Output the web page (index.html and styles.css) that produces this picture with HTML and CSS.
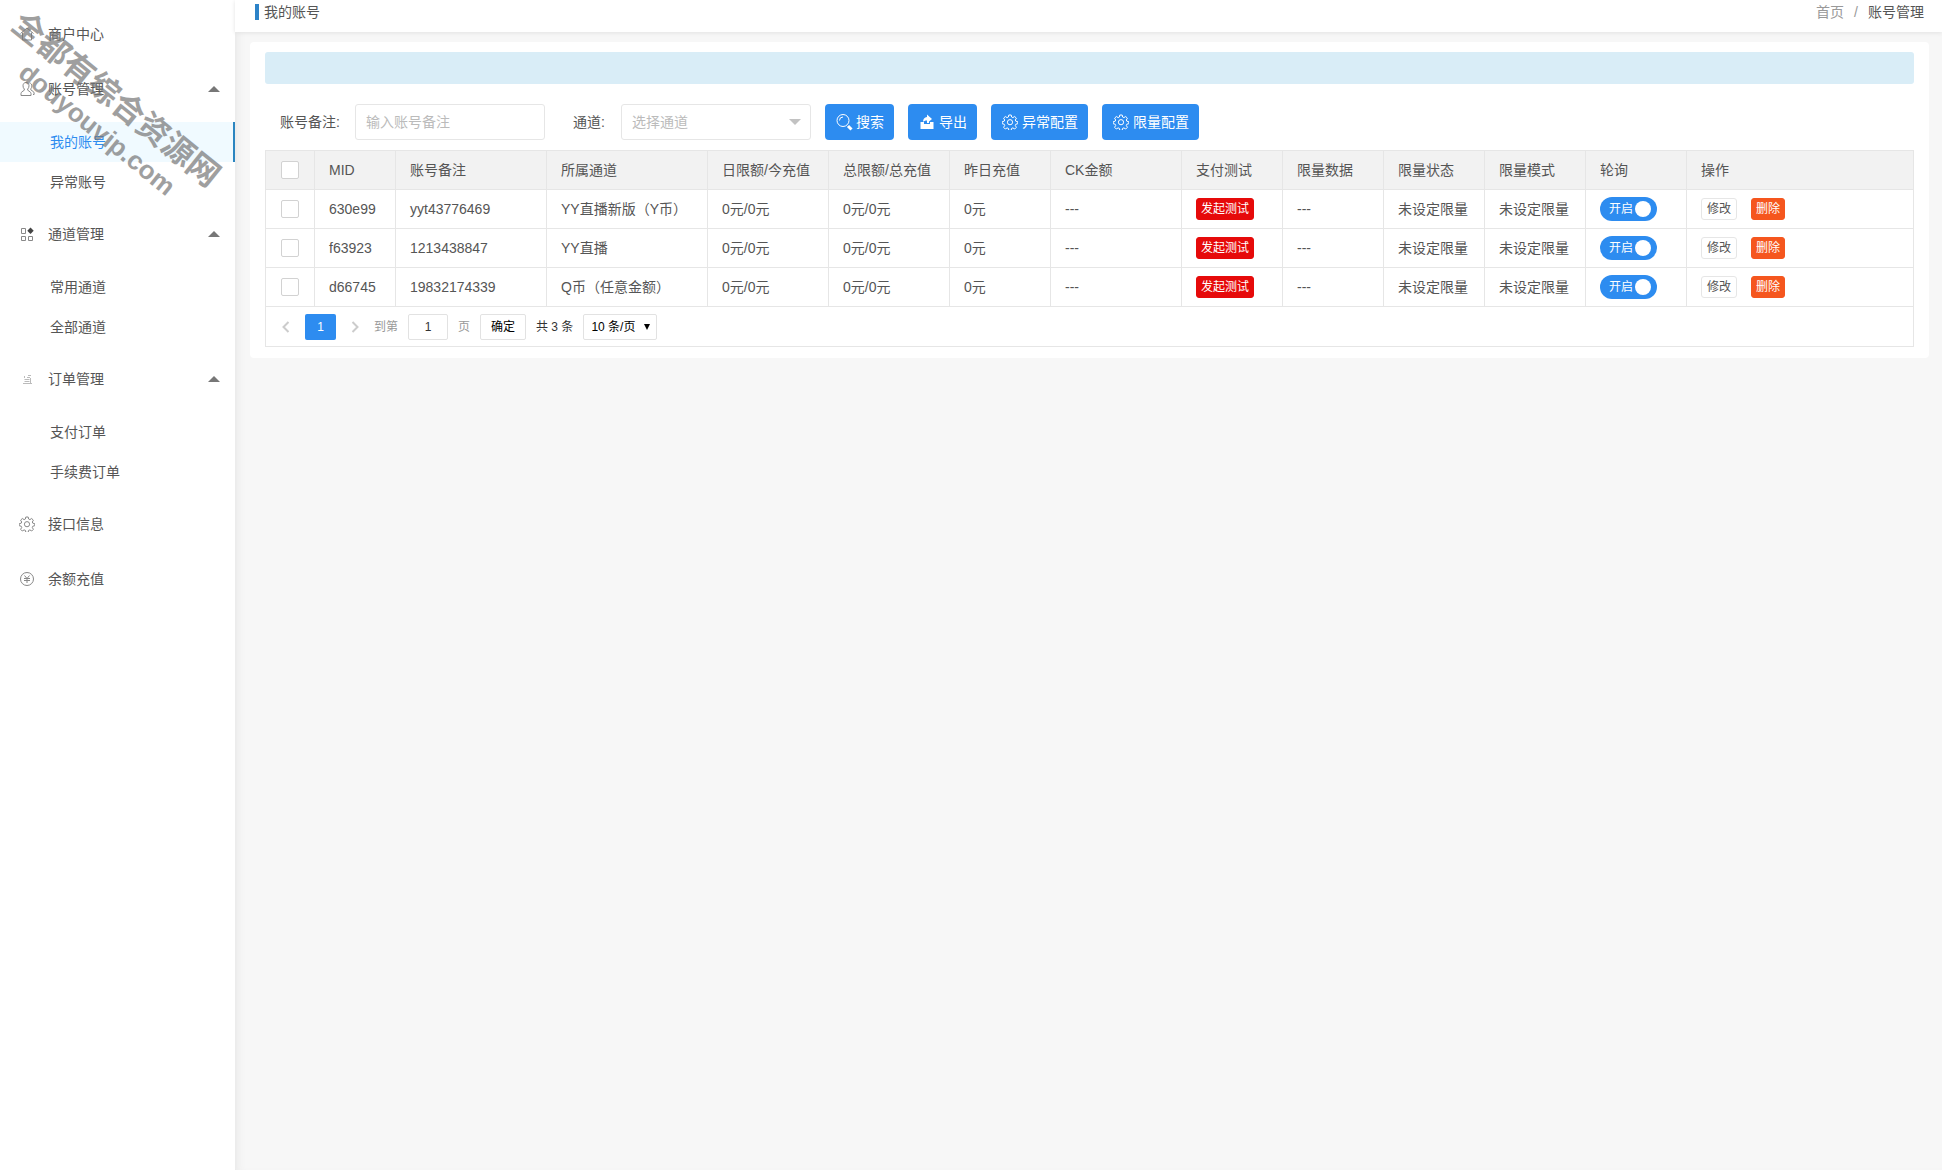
FILE: index.html
```html
<!DOCTYPE html>
<html lang="zh-CN">
<head>
<meta charset="utf-8">
<title>我的账号</title>
<link rel="stylesheet" href="styles.css">
</head>
<body>
<svg class="sprite" aria-hidden="true">
  <symbol id="i-gear" viewBox="0 0 16 16"><path d="M6.8 1h2.4l.4 2 1.3.6 1.8-1.1 1.7 1.7-1.1 1.8.5 1.2 2 .5v2l-2 .5-.5 1.3 1.1 1.8-1.7 1.7-1.8-1.1-1.3.5-.4 2H6.8l-.4-2-1.3-.5-1.8 1.1-1.700-1.700 1.100-1.800-.5-1.300-2-.5v-2l2-.5.5-1.200L1.600 4.200l1.700-1.700 1.800 1.100L6.400 3z"/><circle cx="8" cy="8.200" r="2.600"/></symbol>
</svg>
<div class="app">
  <nav class="side">
    <a class="item" href="#"><svg class="ico" viewBox="0 0 16 16"><path d="M1.500 7.500L8 2l6.500 5.500M3.500 6.500V14h9V6.500"/></svg>商户中心</a>
    <a class="item" href="#"><svg class="ico" viewBox="0 0 16 16"><path d="M7 1.500c2 0 3 1.500 3 3.300 0 1.500-.6 2.500-1.300 3.200v1.200l2.300 1.600c.7.400 1 1 1 1.700v2H2v-2c0-.7.300-1.300 1-1.700l2.300-1.600V8C4.600 7.300 4 6.300 4 4.800 4 3 5 1.500 7 1.500z"/><path d="M10.500 2c1.600.2 2.400 1.500 2.400 3 0 1.300-.5 2.200-1.100 2.800v1l2.200 1.600c.8.400 1.100 1 1.100 1.600v1.500H14"/></svg>账号管理<i class="caret"></i></a>
    <div class="subs">
      <a class="sub active" href="#">我的账号</a>
      <a class="sub" href="#">异常账号</a>
    </div>
    <a class="item" href="#"><svg class="ico" viewBox="0 0 16 16"><path d="M2.500 2.500h4v5h-4zM2.500 10.500h4v4h-4zM9.500 10.500h4v4h-4z"/><path class="fill" d="M11.500 1.500l3.200 3.200L11.500 8 8.300 4.700z"/></svg>通道管理<i class="caret"></i></a>
    <div class="subs">
      <a class="sub" href="#">常用通道</a>
      <a class="sub" href="#">全部通道</a>
    </div>
    <a class="item" href="#"><svg class="ico pale" viewBox="0 0 16 16"><path d="M4 12.500h9M5.500 5v2M11.500 7v5M5.500 8.500h5M5.500 10.500h5M8 6.500h3M9 4.500h3"/></svg>订单管理<i class="caret"></i></a>
    <div class="subs">
      <a class="sub" href="#">支付订单</a>
      <a class="sub" href="#">手续费订单</a>
    </div>
    <a class="item" href="#"><svg class="ico"><use href="#i-gear"/></svg>接口信息</a>
    <a class="item" href="#"><svg class="ico" viewBox="0 0 16 16"><circle cx="8" cy="8" r="6.500"/><path d="M5.500 4.500L8 7.500l2.500-3M8 7.500V12M5 7.500h6M5 9.500h6"/></svg>余额充值</a>
  </nav>
  <main class="main">
    <header class="top">
      <h1>我的账号</h1>
      <div class="crumbs"><a href="#">首页</a><span>/</span><b>账号管理</b></div>
    </header>
    <section class="card">
      <div class="notice"></div>
      <form class="search">
        <label for="remark">账号备注:</label>
        <input class="field" id="remark" type="text" placeholder="输入账号备注">
        <label class="second" for="channel">通道:</label>
        <div class="pick"><select class="field" id="channel"><option>选择通道</option></select></div>
        <button class="btn" type="button"><svg viewBox="0 0 18 18"><circle cx="8" cy="7.500" r="6"/><path d="M4.500 7.500A3.500 3.500 0 0 1 8 4"/><path class="thick" d="M13 13l3.500 3.500"/></svg>搜索</button>
        <button class="btn" type="button"><svg viewBox="0 0 18 18"><path class="solid" d="M2.500 9H6v2h6V9h3.500v7h-13z"/><path class="solid" d="M5 9c0-3 1.500-4.500 4-5V1.500L14 6l-3 2.500V10H9V7.500C7 7.500 6 8 5 9z"/></svg>导出</button>
        <button class="btn" type="button"><svg viewBox="0 0 18 18"><use href="#i-gear" x="1" y="1" width="16" height="16"/></svg>异常配置</button>
        <button class="btn" type="button"><svg viewBox="0 0 18 18"><use href="#i-gear" x="1" y="1" width="16" height="16"/></svg>限量配置</button>
      </form>
      <div class="grid">
        <table>
          <colgroup><col class="w49"><col class="w81"><col class="w151"><col class="w161"><col class="w121"><col class="w121"><col class="w101"><col class="w131"><col class="w101"><col class="w101"><col class="w101"><col class="w101"><col class="w101"><col></colgroup>
          <thead><tr><th><input type="checkbox" aria-label="全选"></th><th>MID</th><th>账号备注</th><th>所属通道</th><th>日限额/今充值</th><th>总限额/总充值</th><th>昨日充值</th><th>CK金额</th><th>支付测试</th><th>限量数据</th><th>限量状态</th><th>限量模式</th><th>轮询</th><th>操作</th></tr></thead>
          <tbody>
            <tr><td><input type="checkbox" aria-label="选择 630e99"></td><td>630e99</td><td>yyt43776469</td><td>YY直播新版（Y币）</td><td>0元/0元</td><td>0元/0元</td><td>0元</td><td>---</td><td><button class="mini red">发起测试</button></td><td>---</td><td>未设定限量</td><td>未设定限量</td><td><button class="switch" role="switch" aria-checked="true">开启<i></i></button></td><td><button class="mini">修改</button><button class="mini orange">删除</button></td></tr>
            <tr><td><input type="checkbox" aria-label="选择 f63923"></td><td>f63923</td><td>1213438847</td><td>YY直播</td><td>0元/0元</td><td>0元/0元</td><td>0元</td><td>---</td><td><button class="mini red">发起测试</button></td><td>---</td><td>未设定限量</td><td>未设定限量</td><td><button class="switch" role="switch" aria-checked="true">开启<i></i></button></td><td><button class="mini">修改</button><button class="mini orange">删除</button></td></tr>
            <tr><td><input type="checkbox" aria-label="选择 d66745"></td><td>d66745</td><td>19832174339</td><td>Q币（任意金额）</td><td>0元/0元</td><td>0元/0元</td><td>0元</td><td>---</td><td><button class="mini red">发起测试</button></td><td>---</td><td>未设定限量</td><td>未设定限量</td><td><button class="switch" role="switch" aria-checked="true">开启<i></i></button></td><td><button class="mini">修改</button><button class="mini orange">删除</button></td></tr>
          </tbody>
        </table>
        <div class="pager">
          <button class="arrow" aria-label="上一页"><svg viewBox="0 0 10 12"><path d="M7.500 1l-5 5 5 5"/></svg></button>
          <button class="page">1</button>
          <button class="arrow" aria-label="下一页"><svg viewBox="0 0 10 12"><path d="M2.500 1l5 5-5 5"/></svg></button>
          <label for="goto">到第</label>
          <input id="goto" type="text" value="1">
          <span class="unit">页</span>
          <button class="ok">确定</button>
          <span class="total">共 3 条</span>
          <div class="size"><select aria-label="每页条数"><option>10 条/页</option></select></div>
        </div>
      </div>
    </section>
  </main>
</div>
<div class="mark" aria-hidden="true"><div class="mark-name">全都有综合资源网</div><div class="mark-site">douyouvip.com</div></div>
</body>
</html>
```
FILE: styles.css
```css
* { box-sizing: border-box; }
body {
  margin: 0;
  background: #fff;
  color: #555;
  font: 14px/20px "Liberation Sans", "Noto Sans CJK SC", sans-serif;
}
button, input, select { font: inherit; color: inherit; margin: 0; }
button { padding: 0; border: 0; background: none; white-space: nowrap; }
a { color: inherit; text-decoration: none; }
svg { fill: none; stroke: currentColor; }
.sprite { display: none; }
.app { display: flex; min-height: calc(100vh - 3px); margin-bottom: 3px; }

.side { flex: 0 0 235px; padding-top: 7px; background: #fff; }
.item { display: flex; align-items: center; height: 55px; padding: 0 15px 2px 19px; }
.ico { width: 16px; height: 16px; margin-right: 13px; color: #888; }
.ico .fill { fill: #444; stroke: none; }
.ico.pale { color: #bbb; }
.caret { margin-left: auto; border: 6px solid transparent; border-top: 0; border-bottom-color: #777; }
.subs { padding: 5px 0; }
.sub { display: flex; align-items: center; height: 40px; padding-left: 50px; border-right: 2px solid transparent; }
.sub.active { color: #2d8cf0; background: #f0faff; border-color: #2b85c0; }

.main { flex: 1; min-width: 0; background: #f7f7f7; box-shadow: inset 8px 0 8px -6px #e6e6e6; }
.top {
  display: flex; align-items: flex-start; justify-content: space-between;
  height: 32px; padding: 2px 18px 0 20px;
  background: #fff; box-shadow: 0 1px 4px #e2e2e2;
}
h1 { display: flex; align-items: center; gap: 5px; margin: 0; font-size: 14px; font-weight: 400; }
h1::before { content: ""; width: 4px; height: 16px; background: #2d83c8; }
.crumbs { display: flex; gap: 10px; color: #999; }
.crumbs b { font-weight: 400; color: #555; }

.card { margin: 10px 13px 0 15px; padding: 10px 15px 11px; border-radius: 4px; background: #fff; }
.notice { height: 32px; border-radius: 3px; background: #d9edf7; }
.search { display: flex; align-items: center; margin: 20px 0 10px; padding-left: 15px; }
.search label { width: 60px; margin-right: 15px; }
.search .second { width: 33px; margin-left: 28px; }
.field { width: 190px; height: 36px; padding: 0 10px; border: 1px solid #e6e6e6; border-radius: 3px; background: #fff; outline: 0; }
.field::placeholder { color: #bbb; }
.pick, .size { position: relative; }
.pick select, .size select { appearance: none; display: block; }
.pick select { color: #bbb; }
.pick::after { content: ""; position: absolute; right: 10px; top: 15px; border: 6px solid transparent; border-bottom: 0; border-top-color: #c2c2c2; }
.btn { display: flex; align-items: center; gap: 3px; height: 36px; margin-left: 14px; padding: 0 10px; border-radius: 4px; background: #2d8cf0; color: #fff; }
.btn svg { width: 18px; height: 18px; }
.btn .thick { stroke-width: 3; }
.btn .solid { fill: #fff; stroke: none; }

.grid { border: 1px solid #e6e6e6; }
table { width: 100%; table-layout: fixed; border-collapse: separate; border-spacing: 0; }
th, td { height: 39px; padding: 0 14px; border-right: 1px solid #e6e6e6; border-bottom: 1px solid #e6e6e6; text-align: left; font-weight: 400; white-space: nowrap; }
th { background: #f2f2f2; }
th:first-child, td:first-child { padding-left: 15px; }
th:last-child, td:last-child { border-right: 0; }
.w49 { width: 49px; } .w81 { width: 81px; } .w151 { width: 151px; } .w161 { width: 161px; }
.w121 { width: 121px; } .w101 { width: 101px; } .w131 { width: 131px; }
table input { appearance: none; display: block; width: 18px; height: 18px; border: 1px solid #d2d2d2; border-radius: 2px; background: #fff; }
.mini { height: 22px; padding: 0 5px; border: 1px solid #e6e6e6; border-radius: 3px; font-size: 12px; line-height: 20px; vertical-align: middle; }
.mini + .mini { margin-left: 14px; }
.mini.red { padding: 0 4px; border-color: #e60a0a; background: #e60a0a; color: #fff; }
.mini.orange { padding: 0 4px; border-color: #f5561e; background: #f5561e; color: #fff; }
.switch { display: flex; align-items: center; justify-content: space-between; width: 57px; height: 24px; padding: 0 6px 0 9px; border-radius: 12px; background: #2d8cf0; color: #fff; font-size: 12px; }
.switch i { width: 16px; height: 16px; border-radius: 8px; background: #fff; }

.pager { display: flex; align-items: center; height: 39px; padding-left: 7px; color: #333; font-size: 12px; }
.pager button, .pager input, .pager select { height: 26px; }
.arrow { width: 26px; color: #ccc; }
.arrow svg { display: block; width: 10px; height: 12px; margin: auto; stroke-width: 2; }
.pager .arrow { color: #ccc; }
.page { width: 31px; margin: 0 6px; border-radius: 2px; background: #2d8cf0; color: #fff; }
.pager label { margin-left: 6px; color: #999; }
.pager input { width: 40px; margin: 0 10px; border: 1px solid #e2e2e2; border-radius: 2px; text-align: center; }
.unit { color: #999; }
.ok { width: 46px; margin: 0 10px; border: 1px solid #e2e2e2; border-radius: 2px; color: #000; }
.size { margin-left: 10px; color: #000; }
.size select { width: 74px; padding: 0 7px; border: 1px solid #e2e2e2; border-radius: 2px; background: #fff; }
.size::after { content: ""; position: absolute; right: 7px; top: 10px; border: 3px solid transparent; border-top: 6px solid #000; border-bottom: 0; }

.mark { position: absolute; left: 28px; top: 5px; transform: rotate(39deg); transform-origin: 0 0; color: #777; opacity: .7; font-weight: 700; pointer-events: none; white-space: nowrap; }
.mark-name { font-size: 32px; line-height: 36px; }
.mark-site { margin-left: 36px; font-size: 26px; line-height: 34px; }
```
